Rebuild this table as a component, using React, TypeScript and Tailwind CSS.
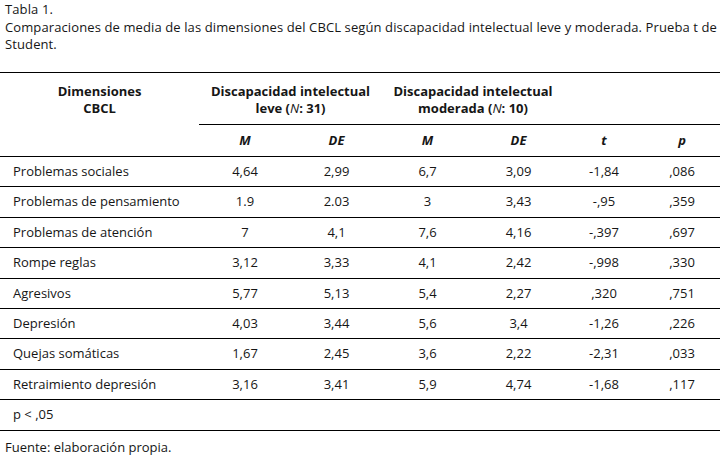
const rows: [string, string, string, string, string, string, string][] = [
  ["Problemas sociales", "4,64", "2,99", "6,7", "3,09", "-1,84", ",086"],
  ["Problemas de pensamiento", "1.9", "2.03", "3", "3,43", "-,95", ",359"],
  ["Problemas de atención", "7", "4,1", "7,6", "4,16", "-,397", ",697"],
  ["Rompe reglas", "3,12", "3,33", "4,1", "2,42", "-,998", ",330"],
  ["Agresivos", "5,77", "5,13", "5,4", "2,27", ",320", ",751"],
  ["Depresión", "4,03", "3,44", "5,6", "3,4", "-1,26", ",226"],
  ["Quejas somáticas", "1,67", "2,45", "3,6", "2,22", "-2,31", ",033"],
  ["Retraimiento depresión", "3,16", "3,41", "5,9", "4,74", "-1,68", ",117"],
];

const cols = "grid grid-cols-[199px_92px_91px_91px_91px_80px_76px]";

export default function App() {
  return (
    <div className="w-[727px] h-[459px] bg-white text-[#161616] text-[13px] font-['Open_Sans',sans-serif] overflow-hidden">
      <div className="pl-[5px] tracking-[0.11px]">
        <p className="leading-[19px]">Tabla 1.</p>
        <p className="leading-[17px]">
          Comparaciones de media de las dimensiones del CBCL según discapacidad intelectual leve y moderada. Prueba t de
          Student.
        </p>
      </div>

      <div className="w-[720px] mt-[19px]">
        <div className={`${cols} grid-rows-[52px_31px] border-t border-b border-black font-bold`}>
          <div className="flex flex-col items-center justify-center leading-[17px] pt-[2px]">
            <span>Dimensiones</span>
            <span>CBCL</span>
          </div>
          <div className="col-span-2 flex flex-col items-center justify-center leading-[17px] pt-[2px] border-b border-black">
            <span>Discapacidad intelectual</span>
            <span>
              leve (<i className="font-normal">N</i>: 31)
            </span>
          </div>
          <div className="col-span-2 flex flex-col items-center justify-center leading-[17px] pt-[2px] border-b border-black">
            <span>Discapacidad intelectual</span>
            <span>
              moderada (<i className="font-normal">N</i>: 10)
            </span>
          </div>
          <div className="border-b border-black" />
          <div className="border-b border-black" />
          <div />
          <div className="flex items-center justify-center italic">M</div>
          <div className="flex items-center justify-center italic">DE</div>
          <div className="flex items-center justify-center italic">M</div>
          <div className="flex items-center justify-center italic">DE</div>
          <div className="flex items-center justify-center italic">t</div>
          <div className="flex items-center justify-center italic">p</div>
        </div>

        {rows.map((r) => (
          <div key={r[0]} className={`${cols} h-[30.4px] border-b border-black items-center`}>
            <div className="pl-[13px]">{r[0]}</div>
            {r.slice(1).map((v, i) => (
              <div key={i} className="text-center">
                {v}
              </div>
            ))}
          </div>
        ))}

        <div className="h-[30.6px] border-b border-black flex items-center pl-[13px]">p &lt; ,05</div>
      </div>

      <p className="pl-[5px] mt-[8px] leading-[17px]">Fuente: elaboración propia.</p>
    </div>
  );
}
